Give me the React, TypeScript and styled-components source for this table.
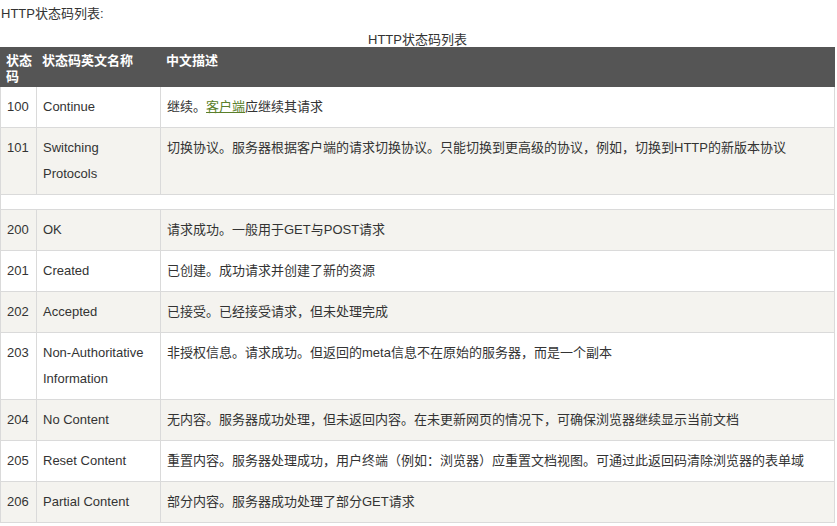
import React from "react";
import styled, { createGlobalStyle } from "styled-components";

const Global = createGlobalStyle`
  html, body { margin: 0; padding: 0; background: #fff; }
  body {
    font-family: "Liberation Sans", Arial, "Noto Sans CJK SC", sans-serif;
    font-size: 13px;
    color: #333;
  }
`;

const Page = styled.div`
  padding: 0;
`;

const Intro = styled.p`
  margin: 0;
  padding: 4px 0 0 1px;
  line-height: 20px;
  color: #333;
`;

const Table = styled.table`
  width: calc(100% - 2px);
  margin-top: 8px;
  border-collapse: collapse;
  table-layout: fixed;
  border: 1px solid #dadada;
`;

const Caption = styled.caption`
  line-height: 15px;
  text-align: center;
  color: #333;
`;

const HeadCell = styled.th`
  background: #555555;
  color: #fff;
  font-weight: bold;
  text-align: left;
  vertical-align: top;
  padding: 5px 2px 1px 5px;
  line-height: 16px;
  border: 1px solid #555555;
`;

const Row = styled.tr<{ $shade: boolean }>`
  background: ${(p) => (p.$shade ? "#f4f3ef" : "#ffffff")};
`;

const Cell = styled.td`
  padding: 7px 6px;
  line-height: 26px;
  vertical-align: top;
  border: 1px solid #dadada;
  color: #333;
`;

const Link = styled.a`
  color: #5a7f2a;
  text-decoration: underline;
`;

type Item = { code: string; name: string; desc: React.ReactNode };

const groups: (Item | null)[] = [
  {
    code: "100",
    name: "Continue",
    desc: (
      <>
        继续。<Link href="#">客户端</Link>应继续其请求
      </>
    ),
  },
  {
    code: "101",
    name: "Switching Protocols",
    desc: "切换协议。服务器根据客户端的请求切换协议。只能切换到更高级的协议，例如，切换到HTTP的新版本协议",
  },
  null,
  { code: "200", name: "OK", desc: "请求成功。一般用于GET与POST请求" },
  { code: "201", name: "Created", desc: "已创建。成功请求并创建了新的资源" },
  { code: "202", name: "Accepted", desc: "已接受。已经接受请求，但未处理完成" },
  {
    code: "203",
    name: "Non-Authoritative Information",
    desc: "非授权信息。请求成功。但返回的meta信息不在原始的服务器，而是一个副本",
  },
  {
    code: "204",
    name: "No Content",
    desc: "无内容。服务器成功处理，但未返回内容。在未更新网页的情况下，可确保浏览器继续显示当前文档",
  },
  {
    code: "205",
    name: "Reset Content",
    desc: "重置内容。服务器处理成功，用户终端（例如：浏览器）应重置文档视图。可通过此返回码清除浏览器的表单域",
  },
  { code: "206", name: "Partial Content", desc: "部分内容。服务器成功处理了部分GET请求" },
];

export default function App() {
  return (
    <Page>
      <Global />
      <Intro>HTTP状态码列表:</Intro>
      <Table>
        <Caption>HTTP状态码列表</Caption>
        <colgroup>
          <col style={{ width: 36 }} />
          <col style={{ width: 124 }} />
          <col />
        </colgroup>
        <thead>
          <tr>
            <HeadCell>状态码</HeadCell>
            <HeadCell>状态码英文名称</HeadCell>
            <HeadCell>中文描述</HeadCell>
          </tr>
        </thead>
        <tbody>
          {groups.map((g, i) =>
            g ? (
              <Row key={i} $shade={i % 2 === 1}>
                <Cell>{g.code}</Cell>
                <Cell>{g.name}</Cell>
                <Cell>{g.desc}</Cell>
              </Row>
            ) : (
              <Row key={i} $shade={false}>
                <Cell colSpan={3} />
              </Row>
            )
          )}
        </tbody>
      </Table>
    </Page>
  );
}
